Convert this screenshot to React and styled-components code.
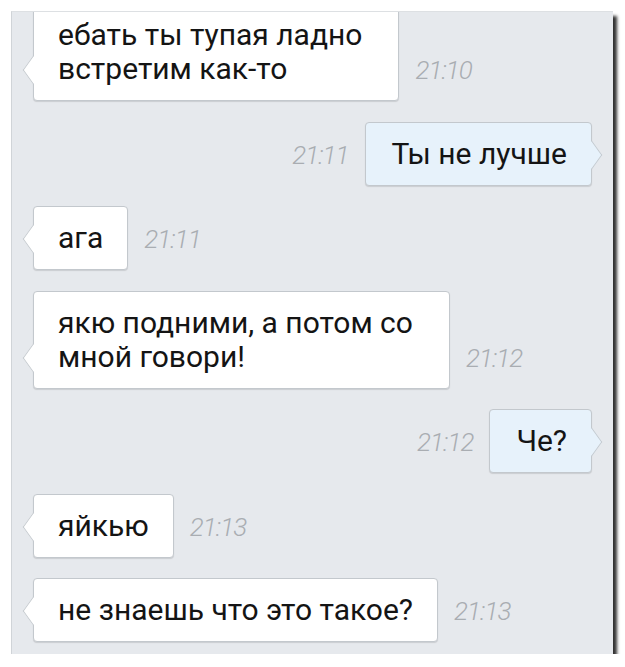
import styled, { createGlobalStyle, css } from "styled-components";

const messages = [
  { id: 1, out: false, lines: ["ебать ты тупая ладно", "встретим как-то"], time: "21:10" },
  { id: 2, out: true, lines: ["Ты не лучше"], time: "21:11" },
  { id: 3, out: false, lines: ["ага"], time: "21:11" },
  { id: 4, out: false, lines: ["якю подними, а потом со", "мной говори!"], time: "21:12" },
  { id: 5, out: true, lines: ["Че?"], time: "21:12" },
  { id: 6, out: false, lines: ["яйкью"], time: "21:13" },
  { id: 7, out: false, lines: ["не знаешь что это такое?"], time: "21:13" },
];

const App = () => {
  return (
    <>
      <GlobalStyle />
      <Panel>
        <Feed>
          {messages.map((m) => (
            <Row key={m.id} $out={m.out}>
              <Bubble $out={m.out} $multi={m.lines.length > 1}>
                {m.lines.map((line, i) => (
                  <Line key={i}>{line}</Line>
                ))}
              </Bubble>
              <Time>{m.time}</Time>
            </Row>
          ))}
        </Feed>
      </Panel>
    </>
  );
};

export default App;

const GlobalStyle = createGlobalStyle`
  html, body {
    margin: 0;
    background: #ffffff;
  }
  body {
    font-family: Roboto, "Liberation Sans", sans-serif;
    overflow: hidden;
  }
`;

const Panel = styled.div`
  box-sizing: border-box;
  width: 602px;
  height: 643px;
  margin: 11px 0 0 11px;
  background: #e6e9ed;
  border-left: 1px solid #d0d4d8;
  border-top: 1px solid #dde0e3;
  box-shadow: 4px 5px 3px rgba(0, 0, 0, 0.8);
  overflow: hidden;
  display: flex;
  flex-direction: column;
  justify-content: flex-end;
`;

const Feed = styled.div`
  display: flex;
  flex-direction: column;
  gap: 20.5px;
  padding: 0 21px 12px 21px;
`;

const Row = styled.div`
  display: flex;
  flex-direction: ${(p) => (p.$out ? "row-reverse" : "row")};
  align-items: last baseline;
  gap: 16px;
`;

const Bubble = styled.div`
  position: relative;
  padding: 14px ${(p) => (p.$multi ? "36px" : "24px")} 14px 24px;
  background: ${(p) => (p.$out ? "#e7f2fb" : "#ffffff")};
  border: 1px solid #c3c8cd;
  border-radius: 4px;
  box-shadow: 0 1px 1px rgba(0, 0, 0, 0.12);
  font-size: 30px;
  line-height: 34px;
  color: #141414;
  white-space: nowrap;

  &::before {
    content: "";
    position: absolute;
    bottom: 20px;
    width: 19px;
    height: 19px;
    background: inherit;
    ${(p) =>
      p.$out
        ? css`
            right: -11px;
            border-top: 1px solid #c3c8cd;
            border-right: 1px solid #c3c8cd;
          `
        : css`
            left: -11px;
            border-left: 1px solid #c3c8cd;
            border-bottom: 1px solid #c3c8cd;
          `}
    transform: scaleX(0.72) rotate(45deg);
  }
  ${(p) =>
    p.$out &&
    css`
      padding: 14px 24px 14px 26px;
    `}
`;

const Line = styled.div``;

const Time = styled.span`
  font-size: 26px;
  font-weight: 300;
  font-style: italic;
  letter-spacing: -1px;
  color: #a9adb2;
`;
